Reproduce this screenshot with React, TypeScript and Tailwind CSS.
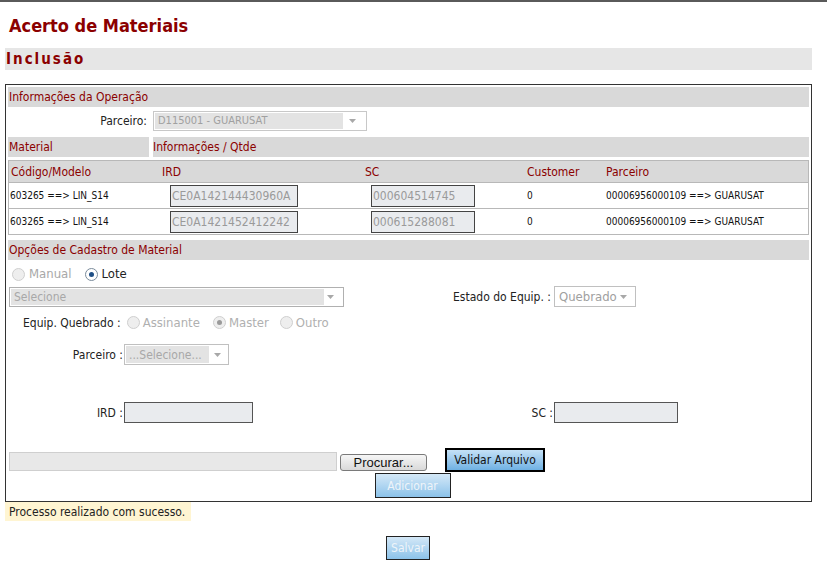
const font = "font-['DejaVu_Sans_Condensed','DejaVu_Sans',sans-serif]";

const Arrow = () => (
  <svg width="7" height="4" viewBox="0 0 7 4" className="shrink-0">
    <path d="M0 0h7L3.5 4z" fill="#a8a8a8" />
  </svg>
);

const Radio = ({ checked, disabled }: { checked?: boolean; disabled?: boolean }) => (
  <span
    className={`inline-flex h-[13px] w-[13px] items-center justify-center rounded-full border ${
      disabled ? 'border-[#cfcfcf] bg-[#eeeeee]' : 'border-[#7a8b9b] bg-white'
    }`}
  >
    {checked && (
      <span className={`h-[5px] w-[5px] rounded-full ${disabled ? 'bg-[#9a9a9a]' : 'bg-[#1f4f86]'}`} />
    )}
  </span>
);

const SectionHeader = ({ children }: { children: React.ReactNode }) => (
  <div className="flex h-[20px] items-center bg-[#d9d9d9] pl-[1px] text-[12px] text-[#8b0000]">{children}</div>
);

const rows = [
  { code: '603265 ==> LIN_S14', ird: 'CE0A142144430960A', sc: '000604514745' },
  { code: '603265 ==> LIN_S14', ird: 'CE0A1421452412242', sc: '000615288081' },
];

export default function App() {
  return (
    <div className={`${font} min-h-[565px] w-[827px] border-t-2 border-[#5a5a5a] bg-white text-[#222]`}>
      <div className="flex h-[46px] items-center pl-[9px] text-[18px] font-bold text-[#8b0000]">
        Acerto de Materiais
      </div>
      <div className="ml-[5px] flex h-[22px] w-[807px] items-center bg-[#e6e6e6] pl-[1px] text-[15px] font-bold tracking-[2px] text-[#8b0000]">
        Inclusão
      </div>

      <div className="ml-[5px] mt-[14px] w-[807px] border border-[#333] px-[2px] pt-[2px]">
        <SectionHeader>Informações da Operação</SectionHeader>

        <div className="flex h-[28px] items-center">
          <div className="w-[141px] pr-[2px] text-right text-[12px]">Parceiro:</div>
          <div className="ml-[4px] flex h-[20px] w-[214px] items-center justify-between border border-[#c8c8c8] bg-white pl-[1px] pr-[10px]">
            <div className="flex h-[16px] w-[188px] items-center bg-[#e3e3e3] pl-[3px] text-[11px] text-[#a0a0a0]">
              D115001 - GUARUSAT
            </div>
            <Arrow />
          </div>
        </div>

        <div className="mt-[2px] flex h-[20px] gap-[4px] text-[12px] text-[#8b0000]">
          <div className="flex w-[141px] items-center bg-[#d9d9d9] pl-[1px]">Material</div>
          <div className="flex flex-1 items-center bg-[#d9d9d9]">Informações / Qtde</div>
        </div>

        <div className="mt-[3px] border border-[#b8b8b8]">
          <div className="grid h-[21px] grid-cols-[150px_203px_162px_79px_1fr] items-center bg-[#d9d9d9] text-[12px] text-[#8b0000]">
            <div className="pl-[2px]">Código/Modelo</div>
            <div className="pl-[3px]">IRD</div>
            <div className="pl-[3px]">SC</div>
            <div className="pl-[3px]">Customer</div>
            <div className="pl-[3px]">Parceiro</div>
          </div>
          {rows.map((r, i) => (
            <div
              key={i}
              className="grid h-[26px] grid-cols-[150px_203px_162px_79px_1fr] items-center border-t border-[#b8b8b8] text-[10px] text-[#111]"
            >
              <div className="pl-[1px]">{r.code}</div>
              <div className="pl-[11px]">
                <div className="flex h-[22px] w-[128px] items-center overflow-hidden border border-[#444] bg-[#e9ebee] pl-[1px] text-[12px] text-[#9a9a9a]">
                  {r.ird}
                </div>
              </div>
              <div className="pl-[9px]">
                <div className="flex h-[22px] w-[104px] items-center overflow-hidden border border-[#444] bg-[#e9ebee] pl-[1px] text-[12px] text-[#9a9a9a]">
                  {r.sc}
                </div>
              </div>
              <div className="pl-[3px]">0</div>
              <div className="pl-[3px]">00006956000109 ==&gt; GUARUSAT</div>
            </div>
          ))}
        </div>

        <div className="mt-[5px]">
          <SectionHeader>Opções de Cadastro de Material</SectionHeader>
        </div>

        <div className="mt-[6px] flex h-[16px] items-center pl-[4px] text-[13px]">
          <Radio disabled />
          <span className="ml-[4px] text-[#a8a8a8]">Manual</span>
          <span className="ml-[13px]" />
          <Radio checked />
          <span className="ml-[4px] text-[#222]">Lote</span>
        </div>

        <div className="mt-[4px] flex items-center">
          <div className="ml-[1px] flex h-[20px] w-[335px] items-center justify-between border border-[#b0b0b0] bg-white pl-[1px] pr-[9px]">
            <div className="flex h-[16px] w-[313px] items-center bg-[#e3e3e3] pl-[3px] text-[12px] text-[#a8a8a8]">
              Selecione
            </div>
            <Arrow />
          </div>
          <div className="ml-[109px] text-[12px] text-[#222]">Estado do Equip. :</div>
          <div className="ml-[3px] flex h-[21px] w-[82px] items-center justify-between border border-[#c0c0c0] bg-white pl-[4px] pr-[8px] text-[13px] text-[#a0a0a0]">
            Quebrado
            <Arrow />
          </div>
        </div>

        <div className="mt-[7px] flex h-[17px] items-center pl-[15px] text-[13px]">
          <span className="text-[12px] text-[#222]">Equip. Quebrado :</span>
          <span className="ml-[6px]" />
          <Radio disabled />
          <span className="ml-[3px] text-[#b0b0b0]">Assinante</span>
          <span className="ml-[13px]" />
          <Radio checked disabled />
          <span className="ml-[3px] text-[#b0b0b0]">Master</span>
          <span className="ml-[11px]" />
          <Radio disabled />
          <span className="ml-[3px] text-[#b0b0b0]">Outro</span>
        </div>

        <div className="mt-[13px] flex h-[21px] items-center">
          <div className="w-[116px] pr-[1px] text-right text-[12px] text-[#222]">Parceiro :</div>
          <div className="flex h-[21px] w-[105px] items-center justify-between border border-[#c0c0c0] bg-white pl-[1px] pr-[7px]">
            <div className="flex h-[17px] w-[83px] items-center bg-[#e3e3e3] pl-[3px] text-[12px] text-[#a8a8a8]">
              ...Selecione...
            </div>
            <Arrow />
          </div>
        </div>

        <div className="mt-[37px] flex h-[21px] items-center text-[12px] text-[#222]">
          <div className="w-[116px] pr-[1px] text-right">IRD :</div>
          <div className="h-[21px] w-[129px] border border-[#555] bg-[#e9ebee]" />
          <div className="w-[301px] pr-[1px] text-right">SC :</div>
          <div className="h-[21px] w-[124px] border border-[#555] bg-[#e9ebee]" />
        </div>

        <div className="mt-[25px] flex items-start">
          <div className="ml-[1px] mt-[4px] h-[19px] w-[328px] border border-[#cfcfcf] bg-[#e8e8e8]" />
          <button className="ml-[3px] mt-[6px] flex h-[17px] w-[87px] items-center justify-center rounded-[3px] border border-[#7a7a7a] bg-gradient-to-b from-[#f6f6f6] to-[#d9d9d9] font-['Liberation_Sans',sans-serif] text-[13px] text-[#111]">
            Procurar...
          </button>
          <button className="ml-[18px] flex h-[24px] w-[100px] items-center justify-center border-2 border-[#000] bg-gradient-to-b from-[#c5e1f6] to-[#6fb1e3] text-[12px] text-[#111]">
            Validar Arquivo
          </button>
        </div>
        <div className="flex justify-center pl-[8px]">
          <button className="mt-[1px] flex h-[25px] w-[76px] items-center justify-center border border-[#222] bg-gradient-to-b from-[#d4e8f7] to-[#8cc3ea] text-[12px] text-[#eef4f9]">
            Adicionar
          </button>
        </div>
        <div className="h-[3px]" />
      </div>

      <div className="ml-[5px] flex h-[19px] w-[186px] items-center bg-[#fff5d2] pl-[4px] text-[12px] text-[#222]">
        Processo realizado com sucesso.
      </div>

      <div className="mt-[15px] flex justify-center pr-[11px]">
        <button className="flex h-[24px] w-[44px] items-center justify-center border border-[#222] bg-gradient-to-b from-[#d4e8f7] to-[#8cc3ea] text-[12px] text-[#eef4f9]">
          Salvar
        </button>
      </div>
    </div>
  );
}
